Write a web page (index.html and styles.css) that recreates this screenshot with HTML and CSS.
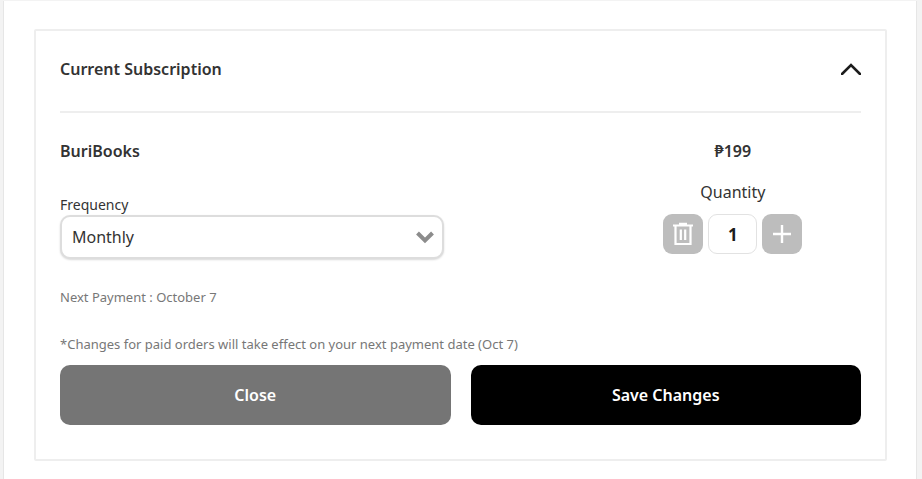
FILE: index.html
```html
<!DOCTYPE html>
<html lang="en">
    <head>
        <meta charset="utf-8">
        <meta name="viewport" content="width=device-width, initial-scale=1.0">
        <link rel="stylesheet" href="styles.css">
        <title>Current Subscription</title>
    </head>
    <body>
        <main class="page">
            <section class="card">
                <header class="card-header">
                    <h2 class="title">Current Subscription</h2>
                    <button type="button" class="toggle" aria-label="Collapse">
                        <svg width="20" height="12" viewBox="0 0 20 12"><path d="M1 11L10 2L19 11" fill="none" stroke="#1c1c1c" stroke-width="2.6" stroke-linecap="round"/></svg>
                    </button>
                </header>

                <form>
                    <div class="plan">
                        <div class="plan-info">
                            <h3 class="title">BuriBooks</h3>
                            <label class="label" for="frequency">Frequency</label>
                            <div class="select-box">
                                <select id="frequency" class="select" name="frequency">
                                    <option>Monthly</option>
                                </select>
                                <svg class="select-arrow" width="20" height="14" viewBox="0 0 20 14"><path d="M2.5 3L10 10.5L17.5 3" fill="none" stroke="#8c8c8c" stroke-width="4"/></svg>
                            </div>
                        </div>
                        <div class="plan-price">
                            <p class="title">₱199</p>
                            <label class="quantity-label" for="quantity">Quantity</label>
                            <div class="quantity">
                                <button type="button" class="quantity-button" aria-label="Remove">
                                    <svg width="20" height="24" viewBox="0 0 20 24" fill="none" stroke="#fff" stroke-width="2.2"><path d="M0 3.5H20M6 1.8H14M2.5 3.5V22H17.5V3.5M7.8 7.5V18M12.2 7.5V18"/></svg>
                                </button>
                                <input type="text" id="quantity" class="quantity-input" name="quantity" value="1">
                                <button type="button" class="quantity-button" aria-label="Add">
                                    <svg width="18" height="18" viewBox="0 0 18 18"><path d="M0 9H18M9 0V18" stroke="#fff" stroke-width="2.4"/></svg>
                                </button>
                            </div>
                        </div>
                    </div>

                    <p class="note">Next Payment : October 7</p>
                    <p class="note">*Changes for paid orders will take effect on your next payment date (Oct 7)</p>

                    <div class="actions">
                        <button type="button" class="button button-close">Close</button>
                        <button type="submit" class="button button-save">Save Changes</button>
                    </div>
                </form>
            </section>
        </main>
    </body>
</html>
```

FILE: styles.css
```css
* {
  box-sizing: border-box;
}
body {
  margin: 0;
  padding: 1px 5px 0 3px;
  background-color: #f3f3f3;
  color: #333333;
  font-family: "Segoe UI", "Noto Sans", "Open Sans", sans-serif;
  font-size: 16px;
  line-height: 24px;
}
h2, h3, p {
  margin: 0;
}
button, input, select {
  font-family: inherit;
}
.page {
  min-height: 100vh;
  padding: 28px 29px 18px 30px;
  background-color: white;
  border-left: 1px solid #e6e6e6;
  border-right: 1px solid #e6e6e6;
}
.card {
  padding: 0 24px 34px;
  border: 2px solid #eeeeee;
  border-radius: 2px;
}
.card-header {
  display: flex;
  justify-content: space-between;
  align-items: center;
  height: 82px;
  padding-bottom: 4px;
  border-bottom: 2px solid #eeeeee;
}
.title {
  font-size: 16px;
  font-weight: 600;
}
.toggle {
  display: flex;
  padding: 0;
  border: none;
  background: none;
}
.plan {
  display: flex;
  justify-content: space-between;
  padding-top: 26px;
}
.plan-info {
  width: 48%;
}
.plan-price {
  display: flex;
  flex-direction: column;
  align-items: center;
  width: 32%;
}
.label {
  display: block;
  margin-top: 32px;
  font-size: 14px;
  line-height: 20px;
}
.select-box {
  position: relative;
}
.select {
  display: block;
  width: 100%;
  height: 44px;
  padding: 0 10px;
  appearance: none;
  border: 2px solid #dddddd;
  border-radius: 10px;
  background-color: white;
  box-shadow: 0 1px 2px rgba(0, 0, 0, 0.15);
  color: #333333;
  font-size: 16px;
}
.select-arrow {
  position: absolute;
  top: 15px;
  right: 9px;
  pointer-events: none;
}
.quantity-label {
  margin-top: 17px;
}
.quantity {
  display: flex;
  gap: 5px;
  margin-top: 10px;
}
.quantity-button {
  display: flex;
  justify-content: center;
  align-items: center;
  width: 40px;
  height: 40px;
  padding: 0;
  border: none;
  border-radius: 9px;
  background-color: #bdbdbd;
}
.quantity-input {
  width: 49px;
  height: 40px;
  padding: 0;
  border: 1px solid #e2e2e2;
  border-radius: 9px;
  color: #1c1c1c;
  font-size: 17px;
  font-weight: 700;
  text-align: center;
}
.note {
  margin-top: 27px;
  color: #777777;
  font-size: 13px;
  line-height: 20px;
}
.plan + .note {
  margin-top: 28px;
}
.actions {
  display: flex;
  gap: 20px;
  margin-top: 11px;
}
.button {
  flex: 1;
  height: 60px;
  border: none;
  border-radius: 10px;
  color: white;
  font-size: 16px;
  font-weight: 600;
}
.button-close {
  background-color: #757575;
}
.button-save {
  background-color: black;
}
```
